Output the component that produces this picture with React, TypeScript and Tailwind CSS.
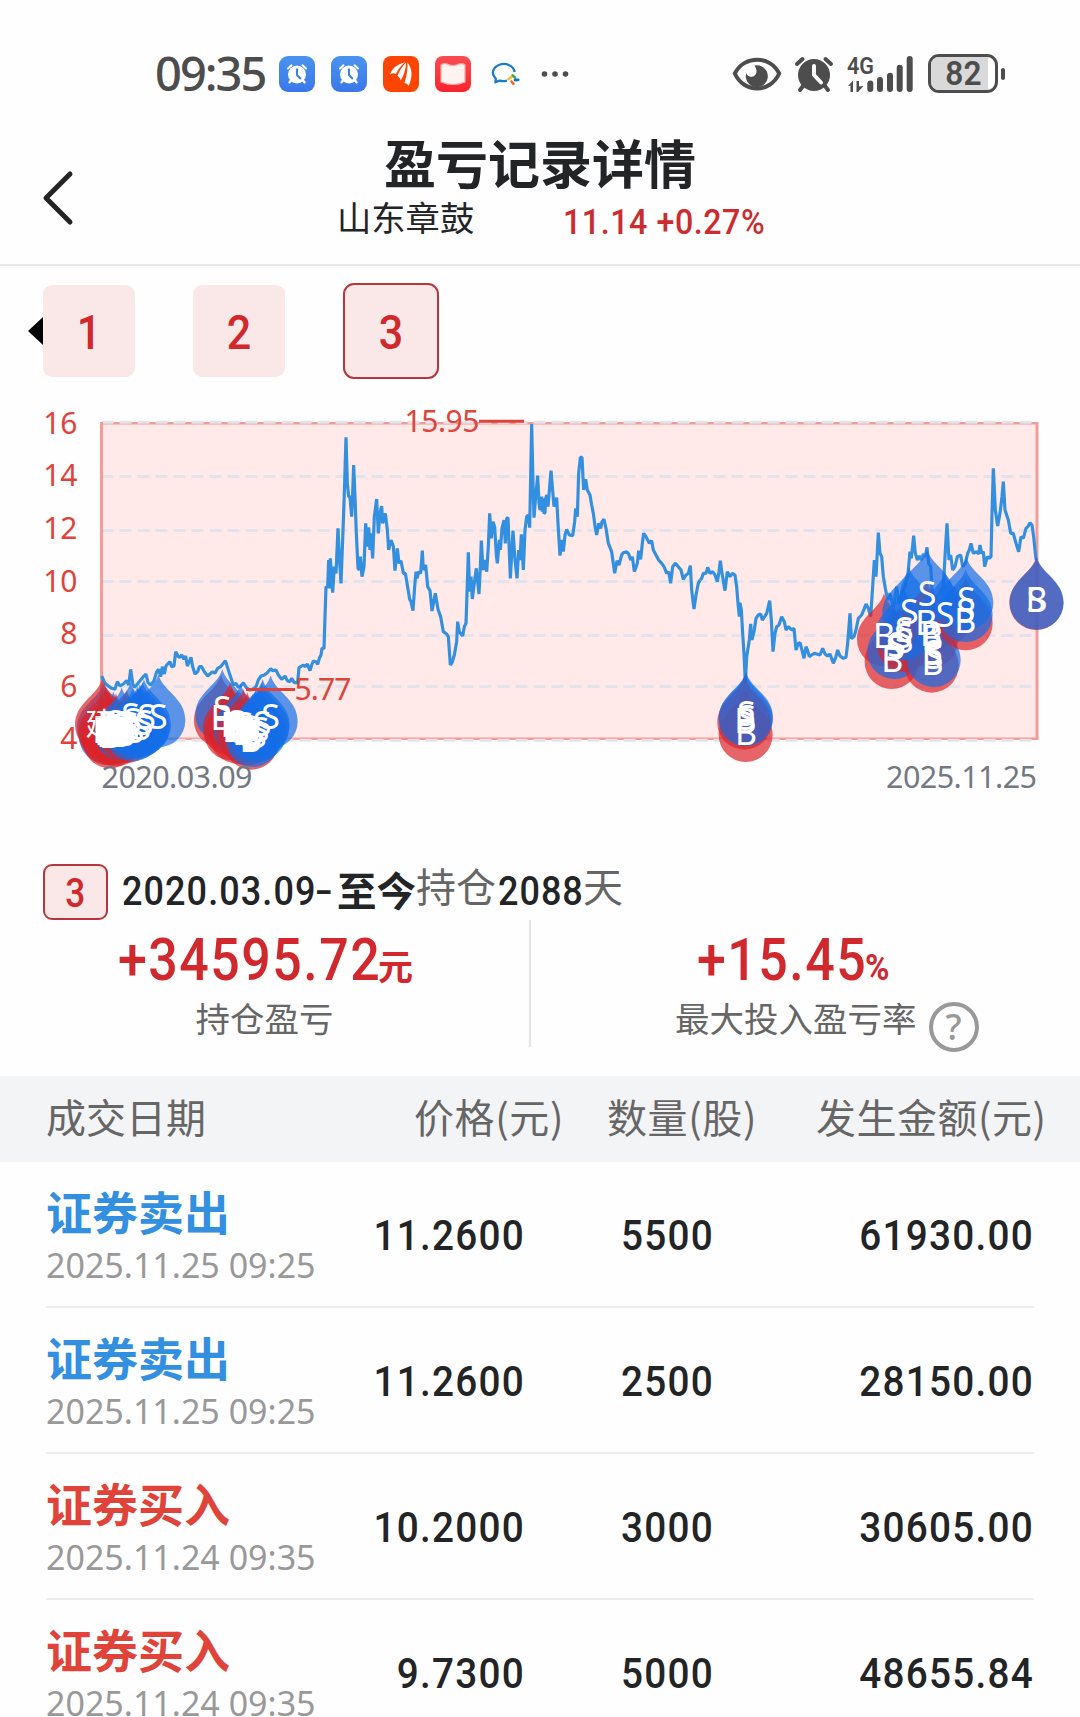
const ROBOTO = "font-['Roboto','Noto_Sans_CJK_SC',sans-serif]";
const NOTO = "font-['Noto_Sans','Noto_Sans_CJK_SC',sans-serif]";
const CJK = "font-['Noto_Sans_CJK_SC',sans-serif]";

function AlarmAppIcon() {
  return (
    <svg width="36" height="36" viewBox="0 0 36 36">
      <defs>
        <linearGradient id="alarmBg" x1="0" y1="0" x2="0" y2="1">
          <stop offset="0" stopColor="#4a93ee" />
          <stop offset="1" stopColor="#3b78ea" />
        </linearGradient>
      </defs>
      <rect width="36" height="36" rx="9" fill="url(#alarmBg)" />
      <circle cx="18" cy="18.5" r="9" fill="#fff" />
      <path d="M9 12.5 L12.5 9.3 M27 12.5 L23.5 9.3" stroke="#fff" strokeWidth="2" strokeLinecap="round" />
      <path d="M12 24.5 L10.5 26.3 M24 24.5 L25.5 26.3" stroke="#fff" strokeWidth="2.4" strokeLinecap="round" />
      <path d="M18 12.5 V19 L21.8 23" stroke="#3f80ea" strokeWidth="2" fill="none" />
    </svg>
  );
}

function StatusBar() {
  return (
    <div className="flex h-[118px] items-center pt-[29px] pl-[155px] text-[#4d4d4d]">
      <div className={`${NOTO} mb-[2px] w-[124px] text-[47px] leading-[60px] font-medium tracking-[-2px] whitespace-nowrap`}>09:35</div>
      <div className="flex items-center gap-4">
        <AlarmAppIcon />
        <AlarmAppIcon />
        <svg width="36" height="36" viewBox="0 0 36 36">
          <rect width="36" height="36" rx="8" fill="#fd4503" />
          <path d="M7 18.5 C9 12 14 8.5 22 6.2 C17.5 10 15 13 13 18 C11 16.8 9 17.3 7 18.5 Z" fill="#fff" />
          <path d="M14.5 19.8 C16.5 14.5 19.5 10 23 6.6 C23 13 21 19 17.8 24.5 C17.3 22.5 16 21 14.5 19.8 Z" fill="#fff" />
          <path d="M21.5 27 C23.8 20 24.7 14 24.5 6.8 C29 12 30.3 20 25.6 30 C25 28.5 23.5 27.3 21.5 27 Z" fill="#fff" />
        </svg>
        <svg width="36" height="36" viewBox="0 0 36 36">
          <defs>
            <linearGradient id="bookBg" x1="0" y1="0" x2="0" y2="1">
              <stop offset="0" stopColor="#fb4d50" />
              <stop offset="1" stopColor="#f8242d" />
            </linearGradient>
          </defs>
          <rect width="36" height="36" rx="8" fill="url(#bookBg)" />
          <path d="M6 9 Q9 7 12 8 Q18 11 24 8 Q27 7 30 9 V26 Q18 31 6 26 Z" fill="#fdf3f1" stroke="#fba9a6" strokeWidth="1.2" />
        </svg>
        <svg width="36" height="36" viewBox="0 0 36 36" fill="none">
          <path d="M27.5 16 A10.8 8.7 0 1 0 8.8 22.6 L8.4 26.3 L12.6 24.6 Q16 25.7 20 24.6" stroke="#1b7dc4" strokeWidth="2.3" strokeLinejoin="round" />
          <path d="M25.5 19.5 l2.5 2" stroke="#35a84a" strokeWidth="2.6" strokeLinecap="round" />
          <path d="M28 24 l3.2 -0.2" stroke="#1572c0" strokeWidth="2.8" strokeLinecap="round" />
          <path d="M24.5 25.5 l2 2.3" stroke="#ea6a34" strokeWidth="2.6" strokeLinecap="round" />
          <path d="M21.5 23 l2.8 -1.8" stroke="#f5c02b" strokeWidth="2.6" strokeLinecap="round" />
        </svg>
        <svg width="30" height="8" viewBox="0 0 30 8" fill="#4d4d4d">
          <circle cx="5.5" cy="4" r="2.8" />
          <circle cx="16" cy="4" r="2.8" />
          <circle cx="26.5" cy="4" r="2.8" />
        </svg>
      </div>
      <svg width="50" height="36" viewBox="0 0 50 36" className="ml-[163px]" fill="none">
        <path d="M2.8 17.5 C12 -1 38 -1 47.2 17.5 C38 37.5 12 37.5 2.8 17.5 Z" stroke="#4d4d4d" strokeWidth="4" />
        <path d="M22.5 9.4 A11 11 0 1 1 14.3 17 A5.2 5.2 0 0 0 23.6 18.6 Q26 14.5 22.5 9.4 Z" fill="#4d4d4d" />
      </svg>
      <svg width="40" height="38" viewBox="0 0 40 38" className="ml-[12px]" fill="none">
        <circle cx="20" cy="20" r="16" fill="#4d4d4d" />
        <path d="M3 9 L8.5 4 M37 9 L31.5 4" stroke="#4d4d4d" strokeWidth="4" strokeLinecap="round" />
        <path d="M9 31 L6 35 M31 31 L34 35" stroke="#4d4d4d" strokeWidth="4" strokeLinecap="round" />
        <path d="M20 11 V20 L27 27.5" stroke="#fff" strokeWidth="4" strokeLinecap="round" strokeLinejoin="round" />
      </svg>
      <svg width="68" height="40" viewBox="847 53 68 40" className="ml-[12px] overflow-visible" fill="#4d4d4d">
        <text x="848" y="72.5" fontFamily="Roboto" fontWeight="600" fontSize="24.5" textLength="27" lengthAdjust="spacingAndGlyphs">4G</text>
        <path d="M849 85 L854 79.5 V91 H851.5 V84.5 Z M857.5 80 H860 V85.5 L864.5 85 L859 91 H857.5 Z" />
        <rect x="868.3" y="79.5" width="6" height="11.5" rx="3" />
        <rect x="878" y="76" width="6" height="15" rx="3" />
        <rect x="888" y="71.7" width="6" height="19.3" rx="3" />
        <rect x="897.7" y="63.7" width="6" height="27.3" rx="3" />
        <rect x="907.7" y="55" width="6" height="36" rx="3" />
      </svg>
      <div className="ml-[14px] flex h-[39px] w-[70px] items-center rounded-[11px] border-[3px] border-[#4d4d4d]">
        <div className={`${ROBOTO} flex h-full w-[57px] items-center justify-center rounded-l-[8px] bg-[#d9d9d9] pl-[7px] text-[34px]`}>
          <span className="inline-block scale-x-[0.93] font-semibold">82</span>
        </div>
      </div>
      <div className="ml-[3px] h-3 w-[4px] rounded-full bg-[#4d4d4d]" />
    </div>
  );
}

function Header() {
  return (
    <div className="flex h-[148px] border-b-2 border-[#e6e6e8]">
      <div className="w-[120px] pt-[52px] pl-[40px]">
        <svg width="36" height="56" viewBox="0 0 36 56" fill="none">
          <path d="M30 4 L6 28 L30 52" stroke="#232426" strokeWidth="5" strokeLinecap="round" strokeLinejoin="round" />
        </svg>
      </div>
      <div className="w-[840px] pt-[14px]">
        <div className={`${CJK} text-center text-[52px] leading-[60px] font-bold text-[#232426]`}>盈亏记录详情</div>
        <div className="flex items-start pl-[217px]">
          <div className={`${CJK} mt-[4px] w-[226px] text-[34.3px] leading-[40px] text-[#232426]`}>山东章鼓</div>
          <div className={`${ROBOTO} mt-[11px] w-[204px] origin-left scale-x-[0.92] text-[35px] leading-[40px] font-medium tracking-[0.6px] whitespace-nowrap text-[#cb2c30]`}>11.14 +0.27%</div>
        </div>
      </div>
    </div>
  );
}

function Periods() {
  return (
    <div className={`${ROBOTO} flex items-center pt-[17px] pl-[28px] text-[49px] font-medium text-[#d0282d]`}>
      <svg width="15" height="28" viewBox="0 0 15 28">
        <path d="M0 14 L15 0 V28 Z" fill="#000" />
      </svg>
      <div className="flex h-[92px] w-[92px] items-center justify-center rounded-[9px] bg-[#fae8e9] pt-1">
        <span className="inline-block scale-x-[0.88]">1</span>
      </div>
      <div className="ml-[58px] flex h-[92px] w-[92px] items-center justify-center rounded-[9px] bg-[#fae8e9] pt-1">
        <span className="inline-block scale-x-[0.88]">2</span>
      </div>
      <div className="ml-[58px] flex h-[96px] w-[96px] items-center justify-center rounded-[11px] border-2 border-[#b5373d] bg-[#fae8e9] pt-1">
        <span className="inline-block scale-x-[0.88]">3</span>
      </div>
    </div>
  );
}

/* Price series, in thirds of a pixel, relative to each segment's own left edge. */
const SEG_A =
  "215,828 225,850 235,858 245,865 255,868 262,845 270,858 280,852 290,842 296,855 302,808 308,850 313,862 320,855 330,842 340,830 348,822 354,848 362,855 372,842 380,815 386,808 392,830 397,800 403,822 408,798 415,790 420,785 425,800 432,798 437,755 445,770 450,772 455,765 462,778 467,768 472,798 478,785 483,772 488,800 495,822 503,815 508,800 515,800 523,815 533,828 542,820 548,815 555,820 563,805 572,800 580,790 586,782 592,800 598,820 605,840 610,855 618,850 625,862 632,858 640,848 648,862 658,870 668,868 678,860 685,840 693,828 703,825 712,818 722,806 728,812 738,810 745,825 755,838 765,828 772,842 780,845 785,835 793,848 803,848 807,803 815,798 820,795 825,800 832,792 840,812 845,795 850,783 858,785 863,793 868,775 873,765 876,745 882,745 885,650 888,560 893,562 896,480 898,565 901,475 905,530 908,578 913,500 918,520 924,385 928,470 933,550 938,420 943,280 948,112 952,250 956,290 960,290 965,350 968,280 971,195 975,290 979,400 984,505 988,510 991,470 996,530 1002,500 1007,370 1012,440 1016,382 1020,450 1023,400 1028,475 1033,350 1040,297";
const SEG_B =
  "50,297 55,400 60,340 65,318 68,370 76,340 82,390 86,450 93,420 100,438 105,512 112,445 117,490 123,482 130,520 136,520 142,555 149,598 153,605 159,632 164,560 168,515 171,535 176,515 182,520 187,452 190,510 197,495 203,560 210,572 216,633 226,580 234,628 242,650 250,695 260,702 265,710 271,795 276,788 283,765 290,725 293,665 298,695 308,708 313,680 318,670 322,550 325,457 329,575 333,530 337,597 344,540 349,505 353,545 357,582 361,500 364,422 369,510 375,480 380,515 385,440 389,340 394,415 399,365 404,380 409,465 412,490 418,420 421,450 426,385 432,360 436,430 440,355 444,353 447,430 451,535 459,392 465,480 471,535 476,450 480,480 484,403 490,510 495,390 500,350 505,345 509,383 512,230 515,72 519,250 522,353 527,290 533,227 537,310 540,330 545,290 547,335 549,295 552,340 555,338 557,295 560,285 564,320 569,260 573,212 577,260 582,320 590,293 594,370 600,467 606,420 610,455 615,405 620,388 628,405 638,407 644,365 647,325 652,350 656,220 661,172 666,172 671,270 677,238 682,270 690,285 695,315 700,340 705,378 710,405 716,370 722,385 726,365 732,358 738,385 745,430 755,455 764,520 771,482 777,495 785,465 790,458 800,455 806,462 812,480 817,470 823,515 832,490 836,452 842,478 847,430 851,400 858,410 868,430 875,422 880,450 888,465 896,480 905,490 912,500 920,520 926,515 932,550 938,500 946,490 955,500 963,510 970,538 978,525 985,520 991,497 995,570 1002,627 1008,585 1015,550 1020,540";
const SEG_C =
  "0,540 5,535 10,520 18,520 23,502 30,520 38,515 45,525 52,545 57,515 61,482 66,520 75,572 82,515 90,530 97,520 105,525 110,560 114,610 118,650 120,608 124,630 128,700 132,760 136,850 140,770 148,720 152,672 156,720 163,690 168,655 175,645 182,642 187,660 194,650 200,640 205,620 209,602 214,660 219,755 225,700 230,680 237,675 245,650 253,665 258,690 265,680 275,690 282,685 288,750 295,730 300,728 307,755 312,775 318,740 323,752 328,770 335,765 343,760 350,762 360,765 368,745 375,762 383,768 390,762 400,790 408,770 413,750 420,768 430,775 438,772 443,730 450,640 454,715 462,710 468,690 475,655 485,645 492,628 498,612 505,625 512,650 518,560 523,480 528,530 535,398 540,460 545,470 550,530 556,565 563,600 570,580 580,620 590,560 597,610 605,580 615,560 624,520 630,455 634,475 641,407 646,460 652,480 658,468 664,480 670,462 676,470 681,442 686,490 692,500 697,580 705,600 730,560 735,470 741,370 747,480 752,465 758,510 765,500 772,470 782,465 788,500 796,490 803,460 808,450 813,430 820,460 830,455 836,462 840,435 845,460 850,455 854,500 862,470 868,475 873,470 876,340 880,205 886,330 893,378 900,340 906,290 910,245 915,330 925,360 932,400 940,400 948,430 956,455 963,410 970,415 978,385 985,378 990,368 996,375 1001,410 1007,470 1009,480";

type Drop = ["r" | "b", number, number];
type Mark = [string, number, number];

const LEFT_DROPS: Drop[] = [
  ["b", 222, 985], ["b", 228, 1010], ["b", 250, 1012], ["r", 216, 975], ["r", 226, 1000], ["r", 240, 1024], ["r", 236, 1015],
  ["r", 258, 1018], ["b", 275, 1000], ["r", 290, 1008], ["b", 302, 985], ["b", 308, 1003], ["b", 322, 996],
  ["b", 330, 990], ["b", 338, 984], ["b", 342, 975], ["b", 385, 961],
  ["r", 573, 962], ["b", 577, 945], ["r", 600, 985], ["r", 604, 1000], ["r", 622, 1010], ["b", 632, 990], ["r", 640, 1005],
  ["r", 664, 1028], ["r", 652, 1015], ["b", 668, 1020], ["b", 676, 1008], ["b", 688, 1000], ["b", 696, 985], ["b", 698, 975], ["b", 722, 964],
];
const LEFT_MARKS: Mark[] = [
  ["S", 385, 988], ["S", 350, 988], ["S", 342, 1005], ["S", 335, 1020], ["S", 302, 985], ["S", 308, 1000], ["S", 298, 1012],
  ["S", 285, 1025], ["B", 232, 1042], ["B", 240, 1045], ["B", 262, 1040], ["B", 220, 1030], ["S", 250, 1030], ["S", 270, 1015],
  ["S", 255, 1005], ["B", 235, 1010], ["S", 290, 1035], ["S", 275, 1042], ["B", 250, 1020], ["S", 315, 1030], ["B", 270, 1030],
  ["B", 245, 1035], ["S", 262, 1022], ["S", 280, 1008], ["B", 226, 1036], ["B", 284, 1038], ["S", 240, 1022], ["S", 300, 1024],
  ["S", 577, 963], ["B", 575, 990], ["B", 605, 1010], ["B", 610, 1025], ["S", 618, 1005], ["B", 630, 1020], ["S", 632, 1030],
  ["B", 640, 1035], ["S", 650, 1025], ["S", 642, 1010], ["B", 662, 1055], ["S", 668, 1050], ["S", 672, 1035], ["S", 682, 1045],
  ["S", 690, 1025], ["S", 696, 1008], ["B", 618, 1018], ["S", 722, 988], ["S", 660, 1040], ["B", 624, 1024], ["B", 648, 1030],
  ["S", 625, 1012], ["S", 655, 1020],
];
const RIGHT_DROPS: Drop[] = [
  ["b", 138, 953], ["r", 137, 1005], ["r", 133, 968], ["b", 137, 958],
  ["r", 552, 718], ["r", 575, 786], ["b", 583, 756], ["r", 612, 735], ["b", 628, 640], ["r", 680, 680], ["r", 692, 722], ["b", 735, 655],
  ["r", 695, 797], ["b", 701, 780], ["b", 610, 700], ["r", 797, 670], ["b", 797, 645], ["b", 681, 585], ["b", 799, 608],
  ["r", 1009, 609], ["b", 1010, 608],
];
const RIGHT_MARKS: Mark[] = [
  ["B", 138, 1035], ["B", 136, 998], ["S", 139, 978], ["S", 140, 990],
  ["B", 552, 744], ["B", 577, 815], ["S", 585, 780], ["S", 590, 770], ["S", 610, 745], ["S", 613, 725], ["S", 612, 760], ["S", 628, 672],
  ["S", 681, 618], ["B", 679, 706], ["B", 693, 738], ["B", 697, 750], ["S", 700, 795], ["S", 702, 808], ["B", 698, 825],
  ["S", 735, 682], ["S", 799, 637], ["S", 797, 668], ["B", 796, 698], ["B", 1010, 635], ["S", 1008, 635],
];

function Markers({ drops, marks }: { drops: Drop[]; marks: Mark[] }) {
  return (
    <>
      {drops.map(([kind, x, y], i) => (
        <path
          key={i}
          transform={`translate(${x} ${y})`}
          d="M0 -138 C12 -88 81 -68 81 0 A81 81 0 1 1 -81 0 C-81 -68 -12 -88 0 -138 Z"
          fill={kind === "r" ? "#dc2429" : "#146ee7"}
          fillOpacity="0.7"
        />
      ))}
      {marks.map(([label, x, y], i) => (
        <text key={i} x={x} y={y} fontSize="102" fill="#fff" textAnchor="middle" fontFamily="Noto Sans">
          {label}
        </text>
      ))}
    </>
  );
}

const TICKS: [string, number, number][] = [
  ["16", 434, 422.3], ["14", 486.3, 476.6], ["12", 539, 530.4], ["10", 592, 581.6], ["8", 643.8, 635.4], ["6", 696.8, 686.5], ["4", 749, 740.3],
];

function Chart() {
  return (
    <svg width="1080" height="421" viewBox="0 379 1080 421" className="block" fontFamily="Noto Sans">
      <rect x="101.5" y="423" width="935.5" height="316" fill="#ffe9e9" />
      <path d="M100.5 423.3 H1038 M100.5 738.7 H1038" stroke="#f39b96" strokeWidth="2.4" />
      {TICKS.map(([label, baseline, y]) => (
        <g key={label}>
          <line x1="101.5" x2="1035" y1={y} y2={y} stroke="#e2e4ed" strokeWidth="3" strokeDasharray="12 6" />
          <text x="77.5" y={baseline} fontSize="30" fill="#e0433a" textAnchor="end">{label}</text>
        </g>
      ))}
      <path d="M101.5 422 V740 M1037 422 V740" stroke="#f39b96" strokeWidth="3" />
      <g fill="none" stroke="#338fdf" strokeWidth="9.5" strokeLinejoin="bevel">
        <polyline transform="translate(30 400) scale(0.33333)" points={SEG_A} />
        <polyline transform="translate(360 400) scale(0.33333)" points={SEG_B} />
        <polyline transform="translate(700 400) scale(0.33333)" points={SEG_C} />
      </g>
      <g transform="translate(30 400) scale(0.33333)">
        <Markers drops={LEFT_DROPS} marks={LEFT_MARKS} />
        <text x="212" y="1005" fontSize="92" fill="#fff" textAnchor="middle" fontFamily="Noto Sans CJK SC">建</text>
      </g>
      <g transform="translate(700 400) scale(0.33333)">
        <Markers drops={RIGHT_DROPS} marks={RIGHT_MARKS} />
      </g>
      <path d="M479 421.3 H524 M246 689.5 H295" stroke="#e0433a" strokeWidth="3" />
      <g fontSize="30" fill="#e0433a">
        <text x="404.5" y="432" textLength="75">15.95</text>
        <text x="294.5" y="700" textLength="57">5.77</text>
      </g>
      <g fontSize="30.5" fill="#737882">
        <text x="101.5" y="788" textLength="151">2020.03.09</text>
        <text x="886" y="788" textLength="151">2025.11.25</text>
      </g>
    </svg>
  );
}

function Summary() {
  return (
    <div className="h-[276px] pt-[64px]">
      <div className="flex h-[56px] items-start pl-[43px] leading-[56px] whitespace-nowrap text-[#232426]">
        <div className={`${ROBOTO} flex h-[56px] w-[65px] items-center justify-center rounded-[9px] border-2 border-[#b5373d] bg-[#fae8e9] pt-1 text-[40px] font-medium text-[#d0282d]`}>
          <span className="inline-block scale-x-[0.88]">3</span>
        </div>
        <div className={`${ROBOTO} ml-[14px] flex w-[215px] text-[40px] font-medium`}>
          <div className="w-[193px] origin-left scale-x-[0.9] tracking-[1.2px]">2020.03.09</div>
          <div className="origin-left scale-x-[1.3]">-</div>
        </div>
        <div className={`${CJK} -mt-[3px] w-[79px] text-[39.5px] font-bold`}>至今</div>
        <div className={`${CJK} -mt-[7px] w-[82px] text-[40px] text-[#666]`}>持仓</div>
        <div className={`${ROBOTO} w-[85px] origin-left scale-x-[0.9] text-[40px] font-medium tracking-[1.1px]`}>2088</div>
        <div className={`${CJK} -mt-[7px] text-[40px] text-[#666]`}>天</div>
      </div>
      <div className="flex">
        <div className="w-[529px] pt-[4px]">
          <div className="flex items-baseline pl-[118px] leading-[72px] font-medium whitespace-nowrap text-[#d0282d]">
            <div className={`${ROBOTO} w-[260px] origin-left scale-x-[0.88] text-[59px] tracking-[1.7px]`}>+34595.72</div>
            <div className={`${CJK} text-[35px] leading-[40px] font-bold`}>元</div>
          </div>
          <div className={`${CJK} -mt-[1px] text-center text-[34.5px] leading-[44px] text-[#666]`}>持仓盈亏</div>
        </div>
        <div className="h-[127px] w-[2px] bg-[#e3e3e5]" />
        <div className="flex-1 pt-[4px]">
          <div className={`${ROBOTO} flex items-baseline pl-[166px] leading-[72px] font-medium whitespace-nowrap text-[#d0282d]`}>
            <div className="w-[168px] origin-left scale-x-[0.88] text-[59px] tracking-[1.7px]">+15.45</div>
            <div className="origin-left scale-x-[0.92] text-[36px] leading-[40px] font-bold">%</div>
          </div>
          <div className={`${CJK} -mt-[1px] flex items-start pl-[144px] text-[34.5px] leading-[44px] text-[#666]`}>
            最大投入盈亏率
            <div className={`${NOTO} mt-[7px] ml-[12px] flex h-[50px] w-[50px] items-center justify-center rounded-full border-4 border-[#999] text-[36px] leading-[40px] font-medium text-[#999]`}>?</div>
          </div>
        </div>
      </div>
    </div>
  );
}

const TRADES = [
  { kind: "sell", name: "证券卖出", time: "2025.11.25 09:25", price: "11.2600", qty: "5500", amount: "61930.00" },
  { kind: "sell", name: "证券卖出", time: "2025.11.25 09:25", price: "11.2600", qty: "2500", amount: "28150.00" },
  { kind: "buy", name: "证券买入", time: "2025.11.24 09:35", price: "10.2000", qty: "3000", amount: "30605.00" },
  { kind: "buy", name: "证券买入", time: "2025.11.24 09:35", price: "9.7300", qty: "5000", amount: "48655.84" },
];

function Trades() {
  return (
    <div>
      <div className={`${CJK} flex h-[86px] bg-[#f3f4f6] pl-[46px] text-[40px] leading-[81px] whitespace-nowrap text-[#666]`}>
        <div className="w-[368px]">成交日期</div>
        <div className="w-[193px] tracking-[0.6px]">价格(元)</div>
        <div className="w-[209px] tracking-[0.6px]">数量(股)</div>
        <div className="tracking-[0.5px]">发生金额(元)</div>
      </div>
      {TRADES.map((t, i) => (
        <div key={i} className="mx-[46px] flex h-[146px] border-b-2 border-[#ececee]">
          <div className="w-[280px] pt-[20px] whitespace-nowrap">
            <div className={`${CJK} text-[46px] leading-[56px] font-bold ${t.kind === "sell" ? "text-[#338fdf]" : "text-[#e0433a]"}`}>{t.name}</div>
            <div className={`${NOTO} mt-[5px] text-[34px] leading-[44px] text-[#999]`}>{t.time}</div>
          </div>
          <div className={`${ROBOTO} flex flex-1 items-center pt-[2px] text-right text-[43px] font-medium tracking-[1.4px] text-[#232426]`}>
            <div className="w-[199px] origin-right scale-x-[0.9]">{t.price}</div>
            <div className="w-[189px] origin-right scale-x-[0.9]">{t.qty}</div>
            <div className="flex-1 origin-right scale-x-[0.9]">{t.amount}</div>
          </div>
        </div>
      ))}
    </div>
  );
}

export default function App() {
  return (
    <div className="h-[1717px] w-[1080px] overflow-hidden bg-[#fefefe]">
      <StatusBar />
      <Header />
      <Periods />
      <Chart />
      <Summary />
      <Trades />
    </div>
  );
}
